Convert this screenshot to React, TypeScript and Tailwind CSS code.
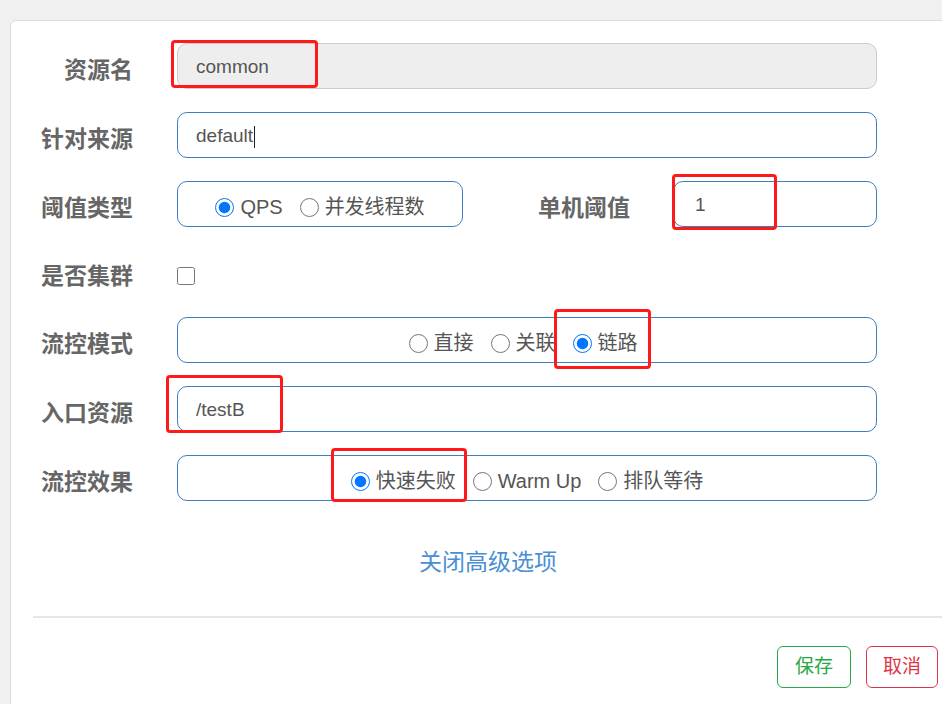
import React from 'react';

const font = { fontFamily: '"Liberation Sans", "Noto Sans CJK SC", sans-serif' };

function Label({ children }: { children: React.ReactNode }) {
    return (
        <div className="w-[122px] shrink-0 pt-[8px] text-right text-[23px] font-bold text-[#666] leading-none">
            {children}
        </div>
    );
}

function Radio({ label, checked }: { label: string; checked?: boolean }) {
    return (
        <label className="flex items-center gap-[6px] text-[20px] text-[#555] leading-none">
            <input type="radio" defaultChecked={checked} className="w-[19px] h-[19px] m-0 accent-[#0075ff]" />
            <span>{label}</span>
        </label>
    );
}

function RadioBox({ options, checked, width }: { options: string[]; checked: string; width: string }) {
    return (
        <div className={`${width} h-[46px] border border-[#3d7fc1] rounded-[10px] flex items-center justify-center gap-[17px] pt-[6px]`}>
            {options.map((o) => (
                <Radio key={o} label={o} checked={o === checked} />
            ))}
        </div>
    );
}

function Mark({ className }: { className: string }) {
    return <div className={`absolute border-[3px] border-[#ff1a1a] rounded-[4px] pointer-events-none ${className}`} />;
}

export default function App() {
    return (
        <div className="relative w-full h-[704px] overflow-hidden bg-[#f0f0f0]" style={font}>
            <div className="pt-[20px] pl-[10px]">
                <div className="w-[956px] h-[700px] bg-white border border-[#dcdcdc] rounded-tl-[6px] pt-[22px]">
                    <div className="flex flex-col gap-[23px]">
                        {/* 资源名 */}
                        <div className="flex items-center h-[46px]">
                            <Label>资源名</Label>
                            <div className="ml-[44px] w-[700px] h-[46px] bg-[#eee] border border-[#ccc] rounded-[10px] flex items-center pl-[18px] pt-[3px] text-[19px] text-[#555]">
                                common
                            </div>
                        </div>

                        {/* 针对来源 */}
                        <div className="flex items-center h-[46px]">
                            <Label>针对来源</Label>
                            <div className="ml-[44px] w-[700px] h-[46px] border border-[#3d7fc1] rounded-[10px] flex items-center pl-[18px] pt-[3px] text-[19px] text-[#555]">
                                default
                                <span className="ml-[1px] w-[1px] h-[22px] bg-[#222]" />
                            </div>
                        </div>

                        {/* 阈值类型 / 单机阈值 */}
                        <div className="flex items-center h-[46px]">
                            <Label>阈值类型</Label>
                            <div className="ml-[44px]">
                                <RadioBox options={['QPS', '并发线程数']} checked="QPS" width="w-[286px]" />
                            </div>
                            <div className="w-[167px] pt-[8px] text-right text-[23px] font-bold text-[#666] leading-none">单机阈值</div>
                            <div className="ml-[43px] w-[204px] h-[46px] border border-[#3d7fc1] rounded-[10px] flex items-center pl-[21px] pt-[3px] text-[19px] text-[#555]">
                                1
                            </div>
                        </div>

                        {/* 是否集群 */}
                        <div className="flex items-center h-[44px]">
                            <Label>是否集群</Label>
                            <input type="checkbox" className="ml-[44px] w-[18px] h-[18px] m-0 mt-[8px]" />
                        </div>

                        {/* 流控模式 */}
                        <div className="flex items-center h-[46px]">
                            <Label>流控模式</Label>
                            <div className="ml-[44px]">
                                <RadioBox options={['直接', '关联', '链路']} checked="链路" width="w-[700px] pr-[8px]" />
                            </div>
                        </div>

                        {/* 入口资源 */}
                        <div className="flex items-center h-[46px]">
                            <Label>入口资源</Label>
                            <div className="ml-[44px] w-[700px] h-[46px] border border-[#3d7fc1] rounded-[10px] flex items-center pl-[18px] pt-[3px] text-[19px] text-[#555]">
                                /testB
                            </div>
                        </div>

                        {/* 流控效果 */}
                        <div className="flex items-center h-[46px]">
                            <Label>流控效果</Label>
                            <div className="ml-[44px]">
                                <RadioBox options={['快速失败', 'Warm Up', '排队等待']} checked="快速失败" width="w-[700px]" />
                            </div>
                        </div>
                    </div>

                    <div className="mt-[46px] h-[30px] flex items-center justify-center text-[23px] text-[#4a8fd4]">
                        关闭高级选项
                    </div>

                    <div className="mt-[39px] ml-[22px] border-t-2 border-[#e6e6e6]" />

                    <div className="mt-[28px] w-[927px] flex justify-end gap-[15px]">
                        <button className="w-[74px] h-[42px] border border-[#28a745] rounded-[6px] text-[19px] text-[#28a745] bg-white">
                            保存
                        </button>
                        <button className="w-[72px] h-[42px] border border-[#dc3545] rounded-[6px] text-[19px] text-[#dc3545] bg-white">
                            取消
                        </button>
                    </div>
                </div>
            </div>

            {/* annotation boxes */}
            <Mark className="left-[171px] top-[40px] w-[147px] h-[48px]" />
            <Mark className="left-[672px] top-[174px] w-[105px] h-[56px]" />
            <Mark className="left-[554px] top-[309px] w-[97px] h-[60px]" />
            <Mark className="left-[166px] top-[375px] w-[117px] h-[58px]" />
            <Mark className="left-[331px] top-[448px] w-[136px] h-[54px]" />
        </div>
    );
}
